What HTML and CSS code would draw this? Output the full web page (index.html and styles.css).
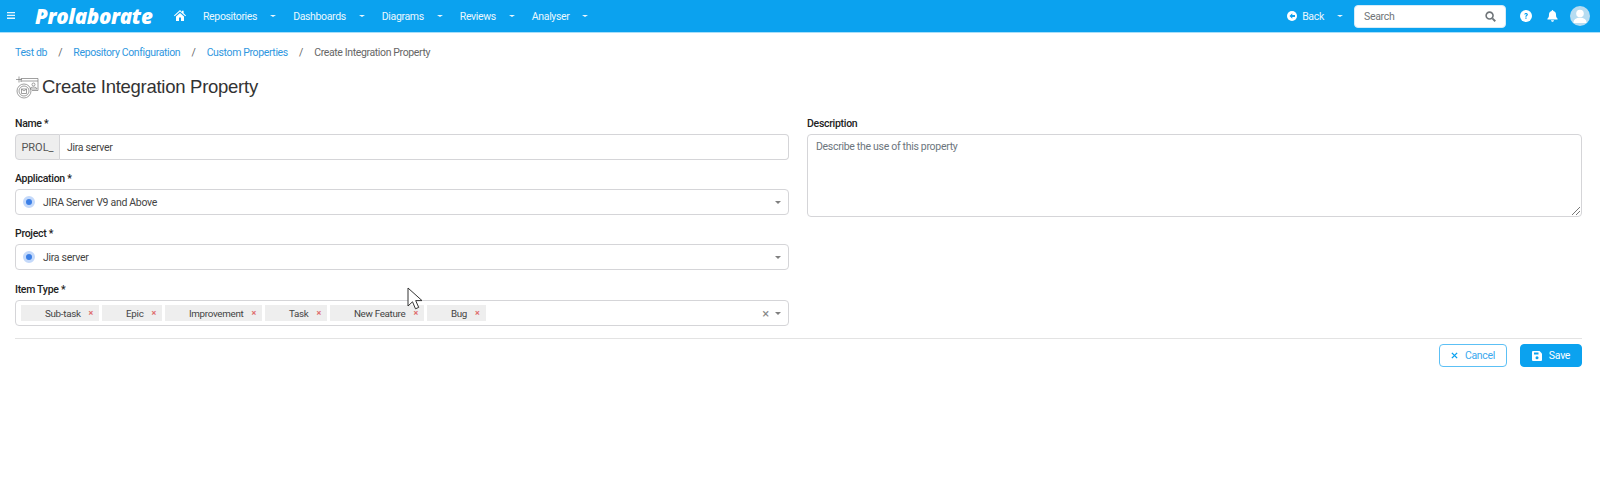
FILE: index.html
```html
<!DOCTYPE html>
<html lang="en">
<head>
<meta charset="utf-8">
<title>Create Integration Property</title>
<link rel="stylesheet" href="styles.css">
</head>
<body>
<header class="navbar">
  <svg class="ic-bars" viewBox="0 0 8 7" width="8" height="7"><path d="M0 0h8v1.300H0zM0 2.800h8v1.300H0zM0 5.600h8v1.300H0z" fill="#e8f6fe"/></svg>
  <span class="logo">Prolaborate</span>
  <svg class="ic-home" viewBox="0 0 12 11" width="12" height="11"><path d="M6 0 0 5.400l.7.8L6 1.600l5.300 4.600.7-.8L9.600 3.300V.8H8v1.100zM2 6.400V11h3V7.600h2V11h3V6.400L6 2.900z" fill="#fff"/></svg>
  <nav class="menu">
    <span class="menu-item">Repositories</span><i class="caret"></i>
    <span class="menu-item">Dashboards</span><i class="caret"></i>
    <span class="menu-item">Diagrams</span><i class="caret"></i>
    <span class="menu-item">Reviews</span><i class="caret"></i>
    <span class="menu-item">Analyser</span><i class="caret"></i>
  </nav>
  <div class="nav-right">
    <svg class="ic-back" viewBox="0 0 10 10" width="10" height="10"><circle cx="5" cy="5" r="5" fill="#fff"/><path d="M5.300 2.200 2.500 5l2.800 2.800V6H8V4H5.300z" fill="#0ba2ef"/></svg>
    <span class="back">Back</span><i class="caret back-caret"></i>
    <div class="search"><span>Search</span>
      <svg viewBox="0 0 12 12" width="11" height="11"><circle cx="5" cy="5" r="3.800" fill="none" stroke="#6f7478" stroke-width="1.700"/><path d="m8 8 3.200 3.200" stroke="#6f7478" stroke-width="2"/></svg>
    </div>
    <svg class="ic-help" viewBox="0 0 12 12" width="12" height="12"><circle cx="6" cy="6" r="6" fill="#fff"/><path d="M4.200 4.600C4.300 3.500 5 3 6 3c1.100 0 1.900.6 1.900 1.500 0 1.300-1.400 1.200-1.400 2.300H5.300C5.300 5.200 6.600 5.300 6.600 4.500 6.600 4.200 6.400 4 6 4c-.4 0-.6.200-.7.600zM5.300 7.500h1.300v1.300H5.300z" fill="#0ba2ef"/></svg>
    <svg class="ic-bell" viewBox="0 0 11 12" width="11" height="12"><path d="M5.500 0c-.5 0-.8.400-.8.900C2.900 1.300 2 2.700 2 4.400c0 2.600-.7 3.400-1.600 4.300v.8h10.200v-.8C9.700 7.800 9 7 9 4.400 9 2.700 8.100 1.300 6.300.9c0-.5-.3-.9-.8-.9zM4 10.300c0 .9.700 1.500 1.500 1.500S7 11.200 7 10.300z" fill="#fff"/></svg>
    <div class="avatar"><svg viewBox="0 0 20 20" width="20" height="20"><circle cx="10" cy="7.500" r="3.800" fill="#fff"/><path d="M3.500 17c0-3.800 2.500-5.200 6.500-5.200s6.500 1.400 6.500 5.200z" fill="#fff"/></svg></div>
  </div>
</header>

<main class="page">
  <ol class="crumbs">
    <li><a>Test db</a></li><li class="sep">/</li>
    <li><a>Repository Configuration</a></li><li class="sep">/</li>
    <li><a>Custom Properties</a></li><li class="sep">/</li>
    <li>Create Integration Property</li>
  </ol>
  <h1 class="title">
    <svg viewBox="0 0 24 24" width="24" height="24" fill="none" stroke="#777" stroke-width=".7"><circle cx="9" cy="16" r="7"/><circle cx="9" cy="16" r="5"/><path d="M6.500 14h5v4.500h-5zM6.500 14l2.500 2 2.500-2"/><path d="M6 7V3.500h17v12h-6"/><path d="M6 6h17"/><path d="M1 4.500h6M4 1.500v6"/><circle cx="18.500" cy="9.500" r="1.500"/><path d="M15 14c0-2.500 7-2.500 7 0z"/></svg>
    <span>Create Integration Property</span>
  </h1>
  <form class="form">
    <div class="col">
      <div class="field">
        <label>Name *</label>
        <div class="group"><span class="addon">PROL_</span><span class="input">Jira server</span></div>
      </div>
      <div class="field">
        <label>Application *</label>
        <div class="select"><i class="dot"></i><span>JIRA Server V9 and Above</span><i class="caret-gray"></i></div>
      </div>
      <div class="field">
        <label>Project *</label>
        <div class="select"><i class="dot"></i><span>Jira server</span><i class="caret-gray"></i></div>
      </div>
      <div class="field field-last">
        <label>Item Type *</label>
        <div class="select multi">
          <span class="chip">Sub-task<b>×</b></span>
          <span class="chip">Epic<b>×</b></span>
          <span class="chip">Improvement<b>×</b></span>
          <span class="chip">Task<b>×</b></span>
          <span class="chip">New Feature<b>×</b></span>
          <span class="chip">Bug<b>×</b></span>
          <b class="clear">×</b><i class="caret-gray"></i>
        </div>
      </div>
    </div>
    <div class="col">
      <div class="field">
        <label>Description</label>
        <div class="textarea">Describe the use of this property
          <svg class="grip" viewBox="0 0 8 8" width="8" height="8"><path d="M0 8 8 0M4 8l4-4" stroke="#777" stroke-width="1"/></svg>
        </div>
      </div>
    </div>
  </form>
  <div class="actions">
    <button type="button" class="btn cancel"><svg viewBox="0 0 8 8" width="7" height="7"><path d="m1 1 6 6M7 1 1 7" stroke="#0ba2ef" stroke-width="1.600"/></svg>Cancel</button>
    <button type="button" class="btn save"><svg viewBox="0 0 10 10" width="10" height="10"><path d="M1 0h6.500L10 2.500V9a1 1 0 0 1-1 1H1a1 1 0 0 1-1-1V1a1 1 0 0 1 1-1z" fill="#fff"/><path d="M2 1.500h4.500v2H2z" fill="#0ba2ef"/><circle cx="5" cy="6.800" r="1.500" fill="#0ba2ef"/></svg>Save</button>
  </div>
</main>

<svg class="cursor" viewBox="0 0 17 25" width="17" height="25"><path d="M1 1v18l4.500-4.200 3 7 3.200-1.400-3-6.800H15z" fill="#fff" stroke="#333" stroke-width="1"/></svg>
</body>
</html>
```
FILE: styles.css
```css
* { box-sizing: border-box; }
html, body { margin: 0; padding: 0; background: #fff; }
body {
  font-family: Roboto, "Liberation Sans", sans-serif;
  font-size: 10.500px;
  letter-spacing: -.3px;
  color: #333;
  height: 484px;
  overflow: hidden;
  position: relative;
}
.navbar {
  height: 33px;
  background: #0ba2ef;
  border-bottom: 1px solid #a9dff9;
  display: flex;
  align-items: center;
  color: #eaf7fe;
  padding-left: 7px;
}
.ic-bars { flex: none; margin-top: -2px; }
.logo {
  font-family: "Open Sans", sans-serif;
  font-weight: 800;
  font-style: italic;
  font-size: 20.500px;
  letter-spacing: -.3px;
  color: #fff;
  margin-left: 20px;
  width: 139px;
}
.ic-home { margin-top: -1px; flex: none; }
.menu { display: flex; align-items: center; margin-left: 17px; letter-spacing: -.35px; }
.menu-item { white-space: nowrap; }
.caret {
  display: block;
  width: 0; height: 0;
  border-left: 3px solid transparent;
  border-right: 3px solid transparent;
  border-top: 2.500px solid #eaf7fe;
  margin-left: 13px;
  margin-right: 17px;
}
.nav-right { margin-left: auto; display: flex; align-items: center; }
.ic-back { flex: none; }
.back { margin-left: 5px; }
.back-caret { margin-left: 13px; margin-right: 11px; }
.search {
  width: 152px; height: 23px;
  background: #fff;
  border-radius: 4px;
  border: 1px solid #d6ecf9;
  display: flex;
  align-items: center;
  justify-content: space-between;
  padding: 0 9px;
  color: #6f7478;
}
.ic-help { margin-left: 14px; flex: none; }
.ic-bell { margin-left: 15px; flex: none; }
.avatar {
  width: 20px; height: 20px; border-radius: 50%;
  background: #b6dcf1;
  margin-left: 12px; margin-right: 10px;
  overflow: hidden;
}
.avatar svg { display: block; }
.page { padding: 0 18px 0 15px; }
.crumbs {
  list-style: none; margin: 0; padding: 2px 0 0;
  display: flex;
  height: 37px;
  align-items: center;
  color: #666;
  letter-spacing: -.37px;
}
.crumbs a { color: #2f97e0; }
.sep { margin: 0 11.200px; color: #666; }
.title {
  margin: 0; height: 34px;
  display: flex; align-items: center;
  font-family: "Liberation Sans", Arial, sans-serif;
  font-weight: 400;
  font-size: 18.500px;
  letter-spacing: -.27px;
  color: #333;
}
.title svg { flex: none; margin-right: 3px; }
.form {
  display: grid;
  grid-template-columns: 774px 775px;
  gap: 18px;
  margin-top: 4px;
  height: 230px;
}
.field { margin-bottom: 3px; }
.field-last { margin-top: 5px; }
.field label {
  display: block;
  height: 26px;
  padding-top: 10px;
  line-height: 12px;
  font-weight: 500;
  color: #222;
}
.field-last label { height: 25px; padding-top: 9px; }
.group, .select {
  height: 26px;
  display: flex;
  align-items: stretch;
  border-radius: 4px;
}
.addon {
  width: 45px;
  background: #eee;
  border: 1px solid #d5d5d8;
  border-radius: 4px 0 0 4px;
  display: flex; align-items: center;
  justify-content: center;
  font-size: 11px;
  letter-spacing: 0;
  color: #555;
}
.input {
  flex: 1;
  border: 1px solid #d5d5d8;
  border-left: 0;
  border-radius: 0 4px 4px 0;
  display: flex; align-items: center;
  padding-left: 7px;
  color: #444;
}
.select {
  border: 1px solid #d5d5d8;
  align-items: center;
  padding-left: 7px;
  color: #444;
}
.select > span:not(.chip) { margin-left: 8px; }
.dot {
  width: 12px; height: 12px; border-radius: 50%;
  background: #3b7fe6;
  border: 3px solid #c4d9fa;
  flex: none;
}
.caret-gray {
  margin-left: auto;
  margin-right: 7px;
  width: 0; height: 0;
  border-left: 3.500px solid transparent;
  border-right: 3.500px solid transparent;
  border-top: 3.500px solid #808080;
}
.multi { padding-left: 5px; gap: 3px; }
.chip {
  height: 16px;
  background: #eee;
  padding-left: 24px;
  padding-right: 6px;
  display: flex; align-items: center;
  font-size: 9.800px;
  letter-spacing: -.3px;
  color: #444;
}
.chip b { font-weight: 700; font-size: 9px; color: #e07070; margin-left: 8px; }
.clear { margin-left: auto; font-weight: 400; font-size: 13px; color: #888; }
.clear + .caret-gray { margin-left: 3px; }
.textarea {
  height: 83px;
  border: 1px solid #d5d5d8;
  border-radius: 4px;
  padding: 5px 8px;
  color: #6c757d;
  position: relative;
}
.grip { position: absolute; right: 1px; bottom: 1px; }
.actions {
  border-top: 1px solid #e3e3e3;
  display: flex; justify-content: flex-end;
  gap: 13px;
  padding-top: 5px;
}
.btn {
  height: 23px;
  border-radius: 4px;
  font: inherit;
  letter-spacing: inherit;
  display: flex; align-items: center; justify-content: center;
  gap: 7px;
  padding: 0;
}
.cancel { width: 68px; background: #fff; border: 1px solid #5cc0f5; color: #3aa9ee; }
.save { width: 62px; background: #0ba2ef; border: 1px solid #0ba2ef; color: #fff; }
.cursor { position: absolute; left: 407px; top: 287px; }
```
